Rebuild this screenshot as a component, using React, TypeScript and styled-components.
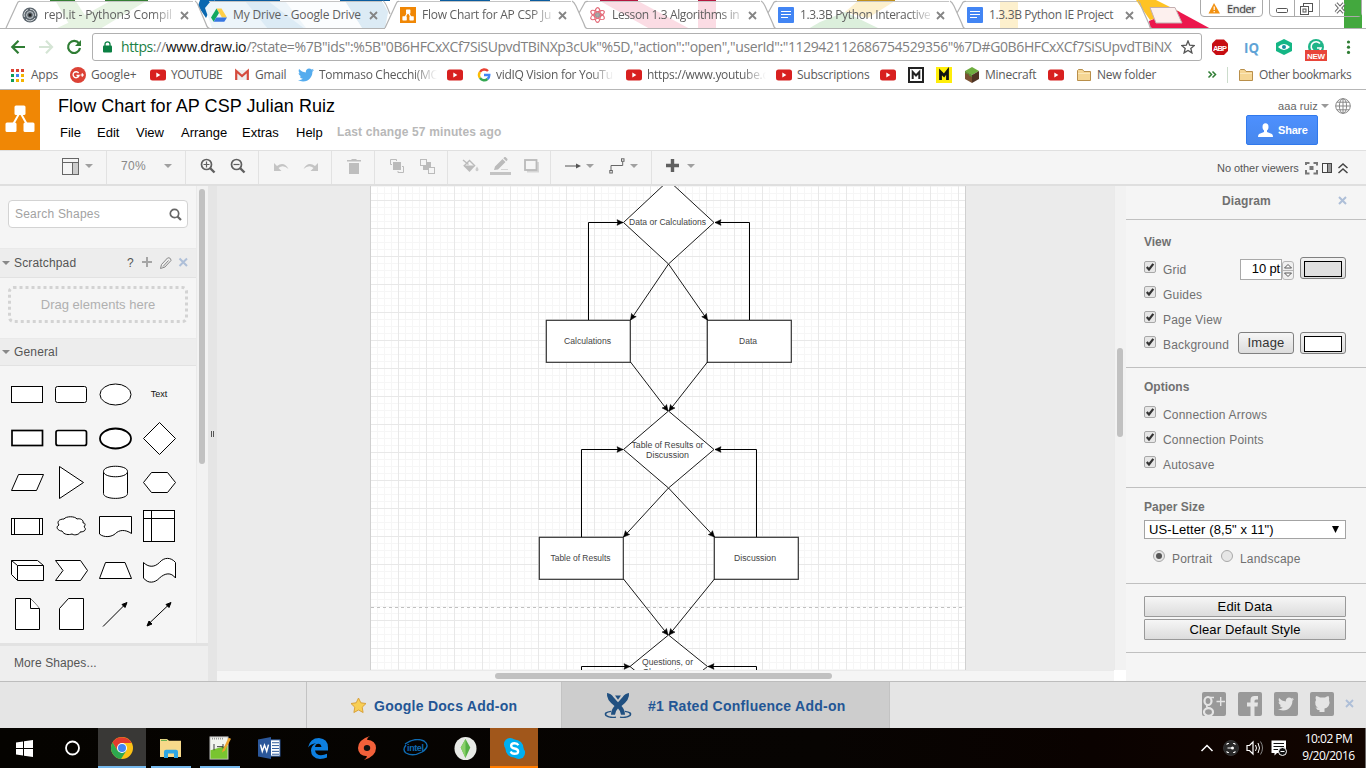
import React from "react";
import styled, { createGlobalStyle } from "styled-components";
import { FaTwitter } from "react-icons/fa";

const Global = createGlobalStyle`
  * { box-sizing: border-box; }
  html, body { margin: 0; padding: 0; overflow: hidden; background: #fff; }
  body { font-family: "Liberation Sans", Arial, sans-serif; }
  svg { display: block; flex: none; }
`;

const ui = `"Open Sans", "Noto Sans", sans-serif`;

const Screen = styled.div`
  width: 1366px;
  height: 768px;
  display: flex;
  flex-direction: column;
  overflow: hidden;
  white-space: nowrap;
`;

/* ---------- browser chrome ---------- */

const TabStrip = styled.div`
  position: relative;
  height: 29px;
  display: flex;
  padding-left: 6px;
  flex: none;
`;
const StripArt = styled.svg`
  position: absolute;
  left: 0;
  top: 0;
`;
const Tab = styled.div`
  position: relative;
  width: 189px;
  height: 29px;
  padding: 1px 0 0 16px;
  display: flex;
  align-items: center;
`;
const TabTitle = styled.span<{ $ls?: number; $fade?: boolean }>`
  width: 130px;
  margin-left: 6px;
  font: 12px/16px ${ui};
  letter-spacing: ${(p) => p.$ls ?? -0.2}px;
  color: #5f5f5f;
  ${(p) => p.$fade && "mask-image: linear-gradient(90deg, #000 108px, transparent 135px);"}
`;
const WindowControls = styled.svg`
  position: absolute;
  left: 1190px;
  top: 0;
`;
const ProfileName = styled.span`
  position: absolute;
  left: 1227px;
  top: 1px;
  font: 11px/15px ${ui};
  letter-spacing: -0.35px;
  color: #444;
  text-shadow: 0 0 2px #888;
`;
const AddressRow = styled.div`
  height: 34px;
  flex: none;
  display: flex;
  align-items: center;
  padding: 2px 0 0 10px;
  background: #fff;
`;
const Omnibox = styled.div`
  width: 1110px;
  height: 28px;
  margin-left: 10px;
  border: 1px solid #b0b0b0;
  border-radius: 3px;
  display: flex;
  align-items: center;
  padding-left: 10px;
`;
const Url = styled.span`
  width: 1060px;
  margin-left: 9px;
  font: 14px/20px ${ui};
  letter-spacing: -0.39px;
  color: #808080;
  i { font-style: normal; color: #1a8043; }
  b { font-weight: 400; color: #111; }
`;
const Extensions = styled.div`
  display: flex;
  align-items: center;
`;
const BookmarkBar = styled.div`
  height: 27px;
  flex: none;
  display: flex;
  align-items: center;
  background: #fff;
  border-bottom: 1px solid #b6b6b6;
  padding-bottom: 2px;
`;
const Bookmark = styled.div<{ $w: number; $gap?: number }>`
  width: ${(p) => p.$w}px;
  display: flex;
  align-items: center;
  gap: ${(p) => p.$gap ?? 5}px;
`;
const BookmarkLabel = styled.span<{ $ls?: number; $fade?: number }>`
  font: 12px/18px ${ui};
  letter-spacing: ${(p) => p.$ls ?? -0.25}px;
  color: #5a5a5a;
  ${(p) => p.$fade && `width:${p.$fade}px; mask-image: linear-gradient(90deg,#000 ${p.$fade - 24}px,transparent);`}
`;

/* ---------- editor header ---------- */

const Header = styled.div`
  height: 60px;
  flex: none;
  display: flex;
  background: #fff;
`;
const Logo = styled.div`
  width: 40px;
  height: 60px;
  background: #f08705;
`;
const TitleBlock = styled.div`
  width: 1206px;
  padding: 5px 0 0 18px;
`;
const DocTitle = styled.div`
  font-size: 18px;
  line-height: 22px;
  color: #000;
  letter-spacing: 0.05px;
`;
const MenuBar = styled.div`
  display: flex;
  padding: 7px 0 0 2px;
  font-size: 13px;
  line-height: 17px;
`;
const MenuItem = styled.span<{ $w: number }>`
  width: ${(p) => p.$w}px;
`;
const SaveStatus = styled.span`
  font-size: 12px;
  font-weight: 700;
  letter-spacing: 0.14px;
  color: #b8b8b8;
`;
const Account = styled.div`
  width: 120px;
  padding: 8px 0 0;
`;
const UserRow = styled.div`
  display: flex;
  align-items: center;
  height: 16px;
  padding-left: 32px;
  font-size: 11px;
  letter-spacing: 0.1px;
  color: #666;
`;
const ShareButton = styled.div`
  width: 72px;
  height: 30px;
  margin-top: 1px;
  display: flex;
  align-items: center;
  gap: 5px;
  padding-left: 11px;
  border: 1px solid #3079ed;
  border-radius: 2px;
  background: linear-gradient(#4d90fe, #4787ed);
  color: #fff;
  font-weight: 700;
  font-size: 11px;
  letter-spacing: -0.2px;
`;
const Toolbar = styled.div`
  height: 36px;
  flex: none;
  display: flex;
  background: #f5f5f5;
  border-top: 1px solid #e0e0e0;
  border-bottom: 2px solid #dfdfdf;
`;
const ToolGroup = styled.div<{ $w: number; $pl: number; $gap?: number }>`
  width: ${(p) => p.$w}px;
  padding: 0 0 3px ${(p) => p.$pl}px;
  gap: ${(p) => p.$gap ?? 6}px;
  display: flex;
  align-items: center;
  border-right: 1px solid #e2e2e2;
`;
const ZoomLabel = styled.span`
  width: 37px;
  font-size: 12px;
  letter-spacing: 0.3px;
  color: #888;
`;
const ViewerInfo = styled.div`
  margin-left: auto;
  width: 149px;
  display: flex;
  align-items: center;
  justify-content: space-between;
  font-size: 11px;
  letter-spacing: -0.05px;
  color: #555;
`;

/* ---------- workspace ---------- */

const Workspace = styled.div`
  height: 495px;
  flex: none;
  display: flex;
  background: #f5f5f5;
`;
const Sidebar = styled.div`
  width: 208px;
  display: flex;
  flex-direction: column;
`;
const SidebarBody = styled.div`
  height: 457px;
  display: flex;
`;
const Palettes = styled.div`
  width: 196px;
`;
const VScroll = styled.div<{ $w: number; $h: number; $top: number; $pad: number }>`
  width: ${(p) => p.$w}px;
  padding: ${(p) => p.$top}px 0 0 ${(p) => p.$pad}px;
  background: #f2f2f2;
  border-left: 1px solid #eaeaea;
  &::after {
    content: "";
    display: block;
    width: 6px;
    height: ${(p) => p.$h}px;
    border-radius: 3px;
    background: #c1c1c1;
  }
`;
const SearchBox = styled.div`
  margin: 14px 0 0 8px;
  width: 180px;
  height: 28px;
  border: 1px solid #d3d3d3;
  border-radius: 4px;
  background: #fff;
  display: flex;
  align-items: center;
  justify-content: space-between;
  padding: 0 5px 0 6px;
  font-size: 12px;
  letter-spacing: 0.22px;
  color: #a2a2a2;
`;
const SectionHead = styled.div<{ $mt: number; $h: number }>`
  margin-top: ${(p) => p.$mt}px;
  height: ${(p) => p.$h}px;
  display: flex;
  align-items: center;
  padding-left: 2px;
  background: #ededed;
  border-top: 1px solid #e9e9e9;
  border-bottom: 1px solid #e2e2e2;
  font-size: 12px;
  letter-spacing: 0.15px;
  color: #555;
`;
const HeadLabel = styled.span<{ $w: number }>`
  width: ${(p) => p.$w}px;
  margin-left: 4px;
`;
const DropZone = styled.div`
  position: relative;
  margin: 8px 0 0 8px;
  width: 180px;
  height: 37px;
  display: flex;
  align-items: center;
  justify-content: center;
  font-size: 13px;
  letter-spacing: 0.02px;
  color: #b0b0b0;
`;
const DropOutline = styled.svg`
  position: absolute;
  left: 0;
  top: 0;
`;
const ShapeGrid = styled.div`
  display: grid;
  grid-template-columns: repeat(4, 44px);
  grid-auto-rows: 44px;
  padding: 6px 0 0 5px;
`;
const ShapeCell = styled.div`
  width: 44px;
  height: 44px;
  display: flex;
  align-items: center;
  justify-content: center;
  font-size: 9px;
  color: #111;
`;
const MoreShapes = styled.div`
  height: 38px;
  padding: 0 0 0 14px;
  line-height: 34px;
  border-top: 3px solid #e2e2e2;
  background: #eee;
  font-size: 12px;
  letter-spacing: 0.1px;
  color: #555;
`;
const Splitter = styled.div`
  width: 9px;
  background: #e5e5e5;
  display: flex;
  align-items: center;
  justify-content: center;
  gap: 1px;
  span { width: 1px; height: 6px; background: #555; }
`;
const CanvasColumn = styled.div`
  width: 897px;
  display: flex;
  flex-direction: column;
`;
const HScroll = styled.div`
  height: 11px;
  padding: 2px 0 0 278px;
  border-top: 1px solid #eaeaea;
  background: #f5f5f5;
  &::after {
    content: "";
    display: block;
    width: 337px;
    height: 6px;
    border-radius: 3px;
    background: #c1c1c1;
  }
`;
const ScrollColumn = styled.div`
  width: 12px;
  height: 495px;
  display: flex;
  background: #fff;
  padding-bottom: 11px;
`;
const FormatPanel = styled.div`
  width: 240px;
  background: #f5f5f5;
  font-size: 12px;
  letter-spacing: 0.2px;
  color: #707070;
`;
const PanelTitle = styled.div`
  height: 34px;
  padding: 0 19px 4px 96px;
  display: flex;
  align-items: center;
  justify-content: space-between;
  border-bottom: 1px solid #c0c0c0;
  font-weight: 700;
  letter-spacing: 0.1px;
`;
const Section = styled.div<{ $h: number; $pt: number }>`
  height: ${(p) => p.$h}px;
  padding: ${(p) => p.$pt}px 20px 0 18px;
  border-bottom: 1px solid #c0c0c0;
`;
const SectionTitle = styled.div<{ $mb: number }>`
  font-weight: 700;
  height: 16px;
  line-height: 16px;
  letter-spacing: 0;
  margin-bottom: ${(p) => p.$mb}px;
`;
const OptionRow = styled.div`
  height: 25px;
  display: flex;
  align-items: center;
`;
const CheckMark = styled.svg`
  margin-bottom: 1px;
`;
const OptionLabel = styled.span<{ $w?: number }>`
  width: ${(p) => (p.$w ? p.$w + "px" : "auto")};
  margin-left: 7px;
  padding-top: 5px;
`;
const RadioLabel = styled(OptionLabel)`
  padding-top: 3px;
`;
const PointInput = styled.div`
  width: 42px;
  height: 21px;
  margin-top: 3px;
  padding-right: 1px;
  border: 1px solid #a9a9a9;
  background: #fff;
  color: #000;
  font-size: 13px;
  line-height: 18px;
  text-align: right;
  letter-spacing: -0.15px;
`;
const Spinner = styled.svg`
  margin-top: 6px;
`;
const ColorButton = styled.div<{ $c: string }>`
  width: 46px;
  height: 22px;
  margin: 1px 0 0 6px;
  padding: 3px;
  border: 1px solid #808080;
  border-radius: 3px;
  background: linear-gradient(#f2f2f2, #ddd);
  &::after {
    content: "";
    display: block;
    height: 14px;
    border: 1px solid #000;
    background: ${(p) => p.$c};
  }
`;
const ImageButton = styled.div`
  width: 56px;
  height: 22px;
  margin-top: 1px;
  border: 1px solid #808080;
  border-radius: 3px;
  background: linear-gradient(#f6f6f6, #dcdcdc);
  color: #333;
  font-size: 13px;
  line-height: 19px;
  text-align: center;
`;
const PaperSelect = styled.div`
  width: 202px;
  height: 19px;
  border: 1px solid #a3a3a3;
  background: #fff;
  display: flex;
  align-items: center;
  justify-content: space-between;
  padding: 0 6px 0 4px;
  color: #000;
  font-size: 13px;
  letter-spacing: 0.1px;
`;
const Orientation = styled.div`
  display: flex;
  align-items: center;
  margin-top: 8px;
  height: 21px;
  padding-left: 9px;
`;
const WideButton = styled.div`
  width: 202px;
  height: 21px;
  margin-bottom: 2px;
  border: 1px solid #999;
  border-radius: 1px;
  background: linear-gradient(#f6f6f6, #dcdcdc);
  color: #000;
  text-align: center;
  line-height: 19px;
  font-size: 13px;
  letter-spacing: 0.15px;
`;

/* ---------- footer ---------- */

const Footer = styled.div`
  height: 47px;
  flex: none;
  display: flex;
  background: #e5e5e5;
  border-top: 1px solid #bdbdbd;
`;
const FooterBlank = styled.div`
  width: 306px;
`;
const AddOn = styled.div<{ $w: number; $pl: number; $active?: boolean; $gap: number }>`
  width: ${(p) => p.$w}px;
  padding: 1px 0 0 ${(p) => p.$pl}px;
  gap: ${(p) => p.$gap}px;
  display: flex;
  align-items: center;
  border-left: 1px solid #c3c3c3;
  background: ${(p) => (p.$active ? "#cdcdcd" : "transparent")};
  font-weight: 700;
  font-size: 14px;
  letter-spacing: 0.26px;
  color: #235695;
`;
const Socials = styled.div`
  width: 477px;
  border-left: 1px solid #c3c3c3;
  padding: 0 12px 0 0;
  display: flex;
  align-items: center;
  justify-content: flex-end;
  gap: 12px;
`;
const SocialTile = styled.div`
  width: 24px;
  height: 24px;
  margin-bottom: 2px;
  border-radius: 2px;
  background: #999;
  color: #e5e5e5;
  display: flex;
  align-items: center;
  justify-content: center;
  overflow: hidden;
`;
const FooterClose = styled.div`
  padding-bottom: 4px;
  margin-left: -1px;
`;

/* ---------- taskbar ---------- */

const Taskbar = styled.div`
  height: 40px;
  flex: none;
  display: flex;
  background: linear-gradient(90deg, #050300, #070402 60%, #0a0200 80%, #120500);
`;
const TaskItem = styled.div<{ $bg?: string; $bar?: string; $narrow?: boolean }>`
  width: 49px;
  height: 40px;
  padding-right: 1px;
  display: flex;
  align-items: center;
  justify-content: center;
  position: relative;
  &::before {
    content: "";
    position: absolute;
    inset: 0 1px 0 0;
    background: ${(p) => p.$bg ?? "transparent"};
  }
  &::after {
    content: "";
    position: absolute;
    bottom: 0;
    height: 2px;
    left: ${(p) => (p.$narrow ? 4 : 0)}px;
    right: ${(p) => (p.$narrow ? 5 : 1)}px;
    background: ${(p) => p.$bar ?? "transparent"};
  }
  svg { position: relative; }
`;
const Tray = styled.div`
  margin-left: auto;
  width: 166px;
  display: flex;
  align-items: center;
`;
const Clock = styled.div`
  width: 60px;
  margin-left: 7px;
  padding-bottom: 2px;
  font: 12px/17px ${ui};
  letter-spacing: -0.5px;
  color: #fff;
  text-align: center;
`;
const DesktopEdge = styled.div`
  width: 1px;
  height: 40px;
  margin-left: 7px;
  background: #6d6a68;
`;

/* ---------- icons ---------- */

const Cross = ({ c = "#858585", s = 9, w = 1.8 }: { c?: string; s?: number; w?: number }) => (
  <svg width={s} height={s} viewBox="0 0 9 9">
    <path d="M1 1L8 8M8 1L1 8" stroke={c} strokeWidth={w} fill="none" />
  </svg>
);
const Caret = ({ c = "#a0a0a0", s = 8 }: { c?: string; s?: number }) => (
  <svg width={s} height={s / 2} viewBox="0 0 8 4"><path d="M0 0H8L4 4Z" fill={c} /></svg>
);
const YouTube = () => (
  <svg width="16" height="16" viewBox="0 0 16 16">
    <rect x="0" y="2.5" width="16" height="11" rx="2.5" fill="#d8201f" />
    <path d="M6.3 5.6V10.4L10.4 8Z" fill="#fff" />
  </svg>
);
const Folder = () => (
  <svg width="16" height="16" viewBox="0 0 16 16">
    <path d="M1.5 13.5V3.5L2.5 2.5H6.5L8 4.5H14.5V13.5Z" fill="#f5d694" stroke="#b98f4a" />
    <path d="M2 6.5H14" stroke="#fbe7b8" />
  </svg>
);
const DocIcon = () => (
  <svg width="16" height="16" viewBox="0 0 16 16">
    <rect width="16" height="16" rx="1" fill="#4285f4" />
    <path d="M3 4.5H13M3 7.5H13M3 10.5H10" stroke="#fff" strokeWidth="1.2" />
  </svg>
);
const ReplIcon = () => (
  <svg width="16" height="16" viewBox="0 0 16 16">
    <circle cx="8" cy="8" r="7.6" fill="#5d666e" />
    <path d="M8 2.2A5.8 5.8 0 0 1 13.6 9M13 11A5.8 5.8 0 0 1 4 12.3M2.4 10A5.8 5.8 0 0 1 6 2.6" stroke="#dfe3e5" strokeWidth=".9" fill="none" />
    <circle cx="8" cy="8" r="3.4" fill="none" stroke="#c9ced1" strokeWidth="1" />
    <circle cx="8" cy="8" r="1.5" fill="#222" />
  </svg>
);
const DriveIcon = () => (
  <svg width="16" height="16" viewBox="0 0 16 16">
    <path d="M5.5 1.5H10.5L16 10.5H11Z" fill="#ffcf48" />
    <path d="M5.5 1.5L8 6L2.7 14.7L0 10.5Z" fill="#11a861" />
    <path d="M5.3 10.5H16L13.3 14.7H2.7Z" fill="#3777e3" />
  </svg>
);
const DrawIcon = () => (
  <svg width="16" height="16" viewBox="0 0 16 16">
    <rect width="16" height="16" fill="#f08705" />
    <path d="M8 5L4.5 11M8 5L11.5 11" stroke="#fff" strokeWidth="1.2" />
    <rect x="6" y="2.5" width="4.4" height="4.2" rx=".6" fill="#fff" />
    <rect x="2.4" y="9.2" width="4.4" height="4.2" rx=".6" fill="#fff" />
    <rect x="9.4" y="9.2" width="4.4" height="4.2" rx=".6" fill="#fff" />
  </svg>
);
const AtomIcon = () => (
  <svg width="17" height="16" viewBox="0 0 17 16" fill="none" stroke="#e36a78" strokeWidth="1.2">
    <ellipse cx="8.5" cy="8" rx="2.8" ry="7.3" />
    <ellipse cx="8.5" cy="8" rx="2.8" ry="7.6" transform="rotate(60 8.5 8)" />
    <ellipse cx="8.5" cy="8" rx="2.8" ry="7.6" transform="rotate(-60 8.5 8)" />
    <circle cx="8.5" cy="8" r="2" fill="#aaa" stroke="#999" />
  </svg>
);

const StripArtwork = () => (
  <StripArt width="1366" height="29" viewBox="0 0 1366 29">
    <rect width="1366" height="29" fill="#fff" />
    <path d="M55 0H75L88 20L84 29H72Z" fill="#e6f3e2" />
    <path d="M112 0H148L100 29H55L85 15Z" fill="#e6f3e2" />
    <path d="M200 0H215L206 18L198 6Z" fill="#0a68b0" />
    <path d="M205 8L210 2H380L388 12L385 28H212Z" fill="#edf5fa" />
    <path d="M245 1H268L305 29H268Z" fill="#dcebf5" />
    <path d="M345 1H382L388 12L385 28H362Z" fill="#dcebf5" />
    <path d="M285 1H345L362 28H306Z" fill="#fbfdfe" />
    <path d="M600 1H638L690 29H650Z" fill="#fbdce4" />
    <path d="M698 1H716V29H698Z" fill="#fbdce4" />
    <path d="M820 22L845 12L880 29H808Z" fill="#dcefdc" />
    <path d="M858 1H895L868 18L845 12Z" fill="#fdf0cd" />
    <path d="M1000 1H1018V29H1000Z" fill="#fdf0cd" />
    <path d="M1136 0H1156L1180 12L1150 20Z" fill="#ffc324" />
    <path d="M1149 21L1176 10L1211 29H1150Z" fill="#ec174d" />
    <path d="M1150 7.5H1175L1182 23H1156Z" fill="#fdf0ee" stroke="#c3aeb0" />
    <path d="M1344 0H1362V29H1344Z" fill="#43a83e" />
    <path d="M50 0H75V1H50ZM105 0H148V1H105Z" fill="#357f34" />
    <path d="M215 0H280V1H215ZM340 0H390V1H340ZM530 0H550V1H530Z" fill="#0a5c9e" />
    <path d="M440 0H490V1H440Z" fill="#0a5c9e" />
    <path d="M600 0H638V1H600ZM698 0H716V1H698Z" fill="#b5173f" />
    <path d="M857 0H895V1H857Z" fill="#c08f1c" />
    <path d="M19 1.5H193M209 1.5H382M397 1.5H571M586 1.5H760M775 1.5H949M964 1.5H1137" stroke="#c4c4c4" />
    <g fill="none" stroke="#b3b3b3" strokeWidth="1.2">
      <path d="M6 28L17 4Q18 1 20 1.500" />
      <path d="M195 1Q197 2 198 5L206 24Q207 28 210 28.500M385 28L396 4Q397 1 399 1.500M383 1Q385 1 390 14" />
      <path d="M572 1Q574 2 576 6L584 24Q585 28 587 28.500M579 13L584 4Q585 1 588 1.500" />
      <path d="M761 1Q763 2 765 6L773 24Q774 28 776 28.500M768 13L773 4Q774 1 777 1.500" />
      <path d="M950 1Q952 2 954 6L962 24Q963 28 965 28.500M957 13L962 4Q963 1 966 1.500" />
      <path d="M1138 1Q1140 2 1141 6L1149 24Q1150 28 1152 28.500" />
      <path d="M0 28.500H385M587 28.500H1366" />
    </g>
  </StripArt>
);

const Controls = () => (
  <WindowControls width="176" height="20" viewBox="1190 0 176 20">
    <path d="M1200.500 0V13Q1200.500 16.500 1204 16.500H1259Q1262.500 16.500 1262.500 13V0" fill="#fff" fillOpacity=".85" stroke="#aaa" />
    <path d="M1269.500 0V13Q1269.500 16.500 1273 16.500H1358Q1361.500 16.500 1361.500 13V0M1294.500 0V16M1319.500 0V16" fill="#fff" fillOpacity=".5" stroke="#aaa" />
    <path d="M1344 0H1361V16H1344Z" fill="#43a83e" />
    <path d="M1214 3L1220 13.500H1208.500Z" fill="#f29111" />
    <path d="M1214.200 6.500V10M1214.200 11V12.300" stroke="#fff" strokeWidth="1.2" />
    <rect x="1276.500" y="8.500" width="11" height="4" rx="1" fill="#fff" stroke="#555" />
    <rect x="1303.500" y="3.500" width="9" height="8" fill="#fff" stroke="#555" />
    <rect x="1300.500" y="6.500" width="8" height="8" fill="#fff" stroke="#555" />
    <rect x="1303" y="9" width="3" height="3" fill="none" stroke="#555" />
    <path d="M1336 3.500L1344 12.500M1344 3.500L1336 12.500" stroke="#666" strokeWidth="3.600" />
    <path d="M1336 3.500L1344 12.500M1344 3.500L1336 12.500" stroke="#fff" strokeWidth="1.800" />
  </WindowControls>
);

const tabs = [
  { icon: <ReplIcon />, title: "repl.it - Python3 Compil", fade: true, ls: -0.14 },
  { icon: <DriveIcon />, title: "My Drive - Google Drive", ls: -0.15 },
  { icon: <DrawIcon />, title: "Flow Chart for AP CSP Ju", fade: true, ls: -0.25 },
  { icon: <AtomIcon />, title: "Lesson 1.3 Algorithms in", fade: true, ls: -0.38 },
  { icon: <DocIcon />, title: "1.3.3B Python Interactive", fade: true, ls: -0.36 },
  { icon: <DocIcon />, title: "1.3.3B Python IE Project", ls: -0.35 },
];

const BrowserTop = () => (
  <>
    <TabStrip>
      <StripArtwork />
      {tabs.map((t) => (
        <Tab key={t.title}>
          {t.icon}
          <TabTitle $ls={t.ls} $fade={t.fade}>{t.title}</TabTitle>
          <svg width="6" height="1" />
          <Cross />
        </Tab>
      ))}
      <Controls />
      <ProfileName>Ender</ProfileName>
    </TabStrip>
    <AddressRow>
      <svg width="72" height="16" viewBox="10 0 72 16" fill="none" strokeWidth="2.200">
        <path d="M25 8H12.500M18.500 1.800L12.300 8L18.500 14.200" stroke="#2f7d34" />
        <path d="M39 8H51.500M46 1.800L52 8L46 14.200" stroke="#d5e5d5" />
        <path d="M79 4.500A6 6 0 1 0 80 9" stroke="#2f7d34" />
        <path d="M81 1V7H75Z" fill="#2f7d34" stroke="none" />
      </svg>
      <Omnibox>
        <svg width="9" height="12" viewBox="0 0 9 12">
          <rect y="4.500" width="9" height="7" rx="1" fill="#0b8043" />
          <path d="M2 5V3.300A2.500 2.500 0 0 1 7 3.300V5" fill="none" stroke="#0b8043" strokeWidth="1.300" />
        </svg>
        <Url>
          <i>https</i>://<b>www.draw.io</b>/?state=%7B"ids":%5B"0B6HFCxXCf7SiSUpvdTBiNXp3cUk"%5D,"action":"open","userId":"112942112686754529356"%7D#G0B6HFCxXCf7SiSUpvdTBiNX
        </Url>
        <svg width="14" height="14" viewBox="0 0 14 14">
          <path d="M7 1L8.700 5.200L13.300 5.500L9.800 8.400L10.900 12.900L7 10.400L3.100 12.900L4.200 8.400L.7 5.500L5.300 5.200Z" fill="none" stroke="#555" strokeWidth="1.300" />
        </svg>
      </Omnibox>
      <Extensions>
        <svg width="160" height="30" viewBox="1202 32 160 30">
          <path d="M1216 39.500H1224L1228 43.500V51L1224 55H1216L1212 51V43.500Z" fill="#c70d12" />
          <text x="1213" y="50.500" fontSize="7.500" fontWeight="700" fontFamily="Liberation Sans" fill="#fff" textLength="14">ABP</text>
          <text x="1244" y="52.500" fontSize="15" fontWeight="700" fontFamily="Open Sans" fill="#60a3d6" textLength="15" lengthAdjust="spacingAndGlyphs">IQ</text>
          <path d="M1284 39L1292 43V51L1284 55L1276 51V43Z" fill="#14b685" />
          <path d="M1278 47Q1284 41 1290 47Q1284 53 1278 47Z" fill="#fff" />
          <circle cx="1284" cy="47" r="2" fill="#1a8fa0" />
          <circle cx="1316" cy="47" r="8" fill="#1fb588" />
          <path d="M1320 43.500A5 5 0 1 0 1321 48H1317" fill="none" stroke="#fff" strokeWidth="1.600" />
          <rect x="1305" y="50" width="22" height="11" fill="#e8453a" />
          <text x="1307" y="59" fontSize="8" fontWeight="700" fontFamily="Liberation Sans" fill="#fff" textLength="18">NEW</text>
          <g fill="#2f7d34"><circle cx="1348.500" cy="42" r="1.600" /><circle cx="1348.500" cy="47.200" r="1.600" /><circle cx="1348.500" cy="52.400" r="1.600" /></g>
        </svg>
      </Extensions>
    </AddressRow>
    <BookmarkBar>
      <Bookmark $w={70} $gap={7}>
        <svg width="24" height="14" viewBox="0 0 24 14">
          {["#db4437", "#db4437", "#db4437", "#0f9d58", "#4285f4", "#f4b400", "#0f9d58", "#f4b400", "#f4b400"].map((c, i) => (
            <rect key={i} x={11 + (i % 3) * 5} y={1 + Math.floor(i / 3) * 5} width="3" height="3" fill={c} />
          ))}
        </svg>
        <BookmarkLabel>Apps</BookmarkLabel>
      </Bookmark>
      <Bookmark $w={80}>
        <svg width="16" height="16" viewBox="0 0 16 16">
          <circle cx="8" cy="8" r="8" fill="#dc4236" />
          <path d="M8.600 6A3 3 0 1 0 9 8.500H6.500" stroke="#fff" strokeWidth="1.400" fill="none" />
          <path d="M10.500 8H14M12.300 6.200V9.800" stroke="#fff" strokeWidth="1.200" />
        </svg>
        <BookmarkLabel $ls={-0.1}>Google+</BookmarkLabel>
      </Bookmark>
      <Bookmark $w={84}><YouTube /><BookmarkLabel $ls={-0.5}>YOUTUBE</BookmarkLabel></Bookmark>
      <Bookmark $w={64}>
        <svg width="16" height="16" viewBox="0 0 16 16">
          <rect x="1.500" y="3" width="13" height="10" fill="#eee" />
          <path d="M2.200 13V4L8 9L13.800 4V13" stroke="#d54b3d" strokeWidth="2.200" fill="none" />
        </svg>
        <BookmarkLabel>Gmail</BookmarkLabel>
      </Bookmark>
      <Bookmark $w={149}><FaTwitter size={16} color="#55acee" /><BookmarkLabel $fade={118} $ls={-0.3}>Tommaso Checchi(MC</BookmarkLabel></Bookmark>
      <Bookmark $w={30}><YouTube /></Bookmark>
      <Bookmark $w={149}>
        <svg width="14" height="16" viewBox="0 0 14 16" fill="none" strokeWidth="2.400">
          <path d="M11 4A5 5 0 0 0 3 5" stroke="#ea4335" />
          <path d="M3 5A5.200 5.200 0 0 0 3 11" stroke="#fbbc05" />
          <path d="M3 11A5 5 0 0 0 10.500 12" stroke="#34a853" />
          <path d="M10.500 12A5 5 0 0 0 12.300 8H7" stroke="#4285f4" />
        </svg>
        <BookmarkLabel $fade={118} $ls={-0.3}>vidIQ Vision for YouTu</BookmarkLabel>
      </Bookmark>
      <Bookmark $w={150}><YouTube /><BookmarkLabel $fade={119} $ls={-0.3}>https://www.youtube.c</BookmarkLabel></Bookmark>
      <Bookmark $w={104}><YouTube /><BookmarkLabel>Subscriptions</BookmarkLabel></Bookmark>
      <Bookmark $w={28}><YouTube /></Bookmark>
      <Bookmark $w={28}>
        <svg width="16" height="16" viewBox="0 0 16 16"><rect x="1" y="1" width="14" height="14" fill="#fff" stroke="#222" strokeWidth="2" /><path d="M4.700 12V5L8 8.500L11.300 5V12" stroke="#222" strokeWidth="2" fill="none" /></svg>
      </Bookmark>
      <Bookmark $w={28}>
        <svg width="16" height="16" viewBox="0 0 16 16"><rect width="16" height="16" fill="#ffee0a" /><path d="M4.500 13V5L8 8.500L11.500 4V13" stroke="#111" strokeWidth="2.800" fill="none" /></svg>
      </Bookmark>
      <Bookmark $w={84}>
        <svg width="16" height="16" viewBox="0 0 16 16">
          <path d="M8 0L15 4L8 8L1 4Z" fill="#6fae3f" /><path d="M1 4L8 8V16L1 12Z" fill="#7a5233" /><path d="M15 4L8 8V16L15 12Z" fill="#4f3423" />
          <path d="M1 4L8 8V10L5 8.500V7.500L1 6Z" fill="#5c9434" />
        </svg>
        <BookmarkLabel>Minecraft</BookmarkLabel>
      </Bookmark>
      <Bookmark $w={28}><YouTube /></Bookmark>
      <Bookmark $w={131}><Folder /><BookmarkLabel $ls={-0.22}>New folder</BookmarkLabel></Bookmark>
      <Bookmark $w={31} $gap={10}>
        <svg width="10" height="10" viewBox="0 0 10 10"><path d="M1.500 1.500L4.500 4.500L1.500 7.500M5.500 1.500L8.500 4.500L5.500 7.500" stroke="#2f7d34" strokeWidth="1.500" fill="none" /></svg>
        <svg width="1" height="16"><rect width="1" height="16" fill="#ccdccc" /></svg>
      </Bookmark>
      <Bookmark $w={120}><Folder /><BookmarkLabel $ls={-0.42}>Other bookmarks</BookmarkLabel></Bookmark>
    </BookmarkBar>
  </>
);

const EditorHeader = () => (
  <>
    <Header>
      <Logo>
        <svg width="40" height="60" viewBox="0 0 40 60">
          <path d="M20 22L11 38M20 22L29 38" stroke="#fff" strokeWidth="2" />
          <rect x="14.500" y="15.500" width="11" height="9.500" rx="1.500" fill="#fff" />
          <rect x="5.500" y="32.500" width="11" height="9.500" rx="1.500" fill="#fff" />
          <rect x="23.500" y="32.500" width="11" height="9.500" rx="1.500" fill="#fff" />
        </svg>
      </Logo>
      <TitleBlock>
        <DocTitle>Flow Chart for AP CSP Julian Ruiz</DocTitle>
        <MenuBar>
          <MenuItem $w={37}>File</MenuItem>
          <MenuItem $w={39}>Edit</MenuItem>
          <MenuItem $w={45}>View</MenuItem>
          <MenuItem $w={61}>Arrange</MenuItem>
          <MenuItem $w={54}>Extras</MenuItem>
          <MenuItem $w={41}>Help</MenuItem>
          <SaveStatus>Last change 57 minutes ago</SaveStatus>
        </MenuBar>
      </TitleBlock>
      <Account>
        <UserRow>
          aaa ruiz
          <svg width="17" height="16" viewBox="0 0 17 16">
            <path d="M3 6H11L7 10Z" fill="#999" />
          </svg>
          <svg width="16" height="16" viewBox="0 0 16 16" fill="none" stroke="#888">
            <circle cx="8" cy="8" r="7.300" /><ellipse cx="8" cy="8" rx="3.600" ry="7.300" />
            <path d="M8 .7V15.300M.7 8H15.300M2 4.200H14M2 11.800H14" />
          </svg>
        </UserRow>
        <ShareButton>
          <svg width="15" height="14" viewBox="0 0 15 14"><ellipse cx="7.500" cy="4" rx="3" ry="3.700" fill="#fff" /><path d="M6 6H9V9L14 11Q15 12 15 14H0Q0 12 1 11L6 9Z" fill="#fff" /></svg>
          Share
        </ShareButton>
      </Account>
    </Header>
    <Toolbar>
      <ToolGroup $w={107} $pl={62}>
        <svg width="17" height="17" viewBox="0 0 17 17"><rect x=".5" y=".5" width="16" height="16" fill="none" stroke="#666" /><path d="M0 4.500H17M10.500 4.500V16" stroke="#666" /><rect x="11" y="5" width="5" height="11" fill="#ccc" /></svg>
        <Caret />
      </ToolGroup>
      <ToolGroup $w={79} $pl={14}><ZoomLabel>70%</ZoomLabel><Caret /></ToolGroup>
      <ToolGroup $w={73} $pl={14} $gap={14}>
        {["M6 3V9M3 6H9", "M3 6H9"].map((d) => (
          <svg key={d} width="16" height="16" viewBox="0 0 16 16" fill="none" stroke="#606060"><circle cx="6.500" cy="6.500" r="5" strokeWidth="1.700" /><path d="M10 10L14.500 14.500" strokeWidth="2.400" /><path d={d} transform="translate(.5 .5)" strokeWidth="1.200" /></svg>
        ))}
      </ToolGroup>
      <ToolGroup $w={73} $pl={14} $gap={14}>
        <svg width="16" height="12" viewBox="0 0 16 12"><path d="M1 3V11H8.500L5.500 8Q10 4 15.500 9Q11 1 4 6Z" fill="#c4c4c4" /></svg>
        <svg width="16" height="12" viewBox="0 0 16 12"><path d="M15 3V11H7.500L10.500 8Q6 4 .5 9Q5 1 12 6Z" fill="#c4c4c4" /></svg>
      </ToolGroup>
      <ToolGroup $w={43} $pl={15}>
        <svg width="14" height="15" viewBox="0 0 14 15"><path d="M0 1H4.500V0H9.500V1H14V2.500H0ZM2 4H12V15H2Z" fill="#bebebe" /></svg>
      </ToolGroup>
      <ToolGroup $w={73} $pl={14} $gap={14}>
        <svg width="16" height="16" viewBox="0 0 16 16"><path d="M1.500 6.500V1.500H7.500V3M9 14.500H14.500V8.500H13M1.500 6.500H3M9 14.500V13" fill="none" stroke="#bbb" /><rect x="4" y="4" width="8" height="8" fill="#bbb" /></svg>
        <svg width="16" height="16" viewBox="0 0 16 16"><rect x="4" y="4" width="8" height="8" fill="#bbb" /><rect x="1.500" y="1.500" width="6" height="6" fill="#f5f5f5" stroke="#bbb" /><rect x="9.500" y="9.500" width="6" height="6" fill="#f5f5f5" stroke="#bbb" /></svg>
      </ToolGroup>
      <ToolGroup $w={103} $pl={14} $gap={11}>
        <svg width="17" height="16" viewBox="0 0 17 16"><path d="M1 2L6.500 6.500M2 8L7.500 2.500L13 8" fill="none" stroke="#bbb" strokeWidth="1.400" /><path d="M1 7.500H13.500L7.500 14Z" fill="#bbb" /><path d="M15 8.500Q17 11 16.300 12.500Q15 14 13.700 12.500Q13 11 15 8.500Z" fill="#ccc" /></svg>
        <svg width="21" height="18" viewBox="0 0 21 18"><path d="M4 13L5 9.500L12.500 2L15.500 5L8 12.500ZM13.300 1.200L14.500 0H15.500L17.500 2V3L16.300 4.200Z" fill="#bbb" /><path d="M11 12.500H18" stroke="#d5d5d5" /><rect y="15" width="21" height="3" fill="#c4c4c4" /></svg>
        <svg width="17" height="14" viewBox="-2 0 17 14"><rect x="3" y="3" width="12" height="10.500" fill="#d5d5d5" /><rect x="1" y="1" width="11.500" height="10" fill="#f5f5f5" stroke="#bababa" strokeWidth="1.800" /></svg>
      </ToolGroup>
      <ToolGroup $w={101} $pl={14} $gap={5}>
        <svg width="16" height="6" viewBox="0 0 16 6"><path d="M0 3H12" stroke="#555" /><path d="M11 0.500L16 3L11 5.500Z" fill="#555" /></svg>
        <Caret />
        <svg width="5" height="1" />
        <svg width="16" height="16" viewBox="0 0 16 16" fill="none" stroke="#666"><rect x=".8" y="12.500" width="2.500" height="2.500" /><rect x="12.500" y=".8" width="2.500" height="2.500" /><path d="M2 12.500V7.500H13.700V3.500" /></svg>
        <Caret />
      </ToolGroup>
      <svg width="45" height="33" viewBox="0 0 45 33"><path d="M14 14.500H27M20.500 8V21" stroke="#606060" strokeWidth="3.400" /><path d="M35 13H43L39 17Z" fill="#a0a0a0" /></svg>
      <ViewerInfo>
        No other viewers
        <svg width="61" height="14" viewBox="1305 0 61 14" fill="none">
          <path d="M1306 4V2H1309.500M1313.500 2H1317V4.500M1317 9V12.500H1313.500M1309.500 12.500H1306V9" stroke="#777" strokeWidth="2" />
          <rect x="1309.500" y="5" width="4" height="4" fill="#777" />
          <rect x="1322.500" y="2.500" width="9" height="9" stroke="#444" /><rect x="1328" y="3" width="3" height="8" fill="#999" /><path d="M1327.500 3V11" stroke="#444" />
          <path d="M1338.500 7L1343 3L1347.500 7M1338.500 12L1343 8L1347.500 12" stroke="#444" strokeWidth="1.500" />
        </svg>
      </ViewerInfo>
    </Toolbar>
  </>
);

/* Palette thumbnails, drawn around a 0,0 centre. */
const shapes: React.ReactNode[] = [
  <rect x="-15.500" y="-7.500" width="31" height="16" />,
  <rect x="-15.500" y="-7.500" width="31" height="16" rx="2" />,
  <ellipse cx="0.500" cy="0.500" rx="15.500" ry="10.500" />,
  null,
  <rect x="-15" y="-7.500" width="30.500" height="15" strokeWidth="1.700" />,
  <rect x="-15" y="-7.500" width="30.500" height="15" rx="2" strokeWidth="1.700" />,
  <ellipse cx="0.500" cy="0.500" rx="15.500" ry="10" strokeWidth="1.800" />,
  <path d="M0.500 -15.500L16.500 0.500L0.500 16.500L-15.500 0.500Z" />,
  <path d="M-8.500 -7.500H16.500L9.500 8.500H-15.500Z" />,
  <path d="M-11.500 -15.500L12.500 0.500L-11.500 16.500Z" />,
  <><path d="M-11.500 -10.500V11.500C-11.500 18 12.500 18 12.500 11.500V-10.500C12.500 -17.500 -11.500 -17.500 -11.500 -10.500" /><path d="M-11.500 -10.500C-11.500 -3.500 12.500 -3.500 12.500 -10.500" /></>,
  <path d="M-7.500 -9.500H8.500L16.500 0.500L8.500 10.500H-7.500L-15.500 0.500Z" />,
  <><rect x="-15.500" y="-7.500" width="31" height="16" /><path d="M-12.500 -7.500V8.500M12.500 -7.500V8.500" /></>,
  <path d="M-7 -7C-12 -7 -14.500 -4 -12 -1C-16 1 -13 5 -9 5C-7 9 -2 9 1 8C4 10 9 8 9 6C14 6 16 3 13 1C15 -2 14 -3 12 -3C13 -6 9 -8 6 -7C4 -10 -5 -10 -7 -7Z" />,
  <path d="M-15.500 -9.500H16.500V7.500C10 3 4 4 0.500 7.500C-3 11 -11 12 -15.500 8Z" />,
  <><rect x="-15.500" y="-15.500" width="31" height="31" /><path d="M-7.500 -15.500V15.500M-15.500 -7.500H15.500" /></>,
  <><path d="M-15.500 -9.500H10.500L16.500 -4.500V10.500H-9.500L-15.500 4.500Z" /><path d="M-9.500 10.500V-4.500H16.500M-9.500 -4.500L-15.500 -9.500" /></>,
  <path d="M-15.500 -9.500H9.500L16.500 0.500L9.500 10.500H-15.500L-8 0.500Z" />,
  <path d="M-9.500 -7.500H10L16.500 8.500H-15.500Z" />,
  <path d="M-15.500 -7.500C-11 -3 -5 -2 0.500 -7.500C5 -13 12 -13 16.500 -7.500V8C12 2 6 3 0.500 8C-4 13 -11 14 -15.500 8Z" />,
  <><path d="M-11.500 -15.500H3.500L12.500 -5.500V15.500H-11.500Z" /><path d="M3.500 -15.500V-5.500H12.500" /></>,
  <path d="M-2.500 -15.500H12.500V15.500H-11.500V-5.500Z" />,
  <><path d="M-12 12.500L10 -9.500" /><path d="M12 -11.500L10 -6.500L7 -9.500Z" fill="#000" /></>,
  <><path d="M-10 9.500L10 -9.500" /><path d="M12 -11.500L10 -6.500L7 -9.500ZM-12 12L-10 7L-7 10Z" fill="#000" /></>,
];

const LeftSidebar = () => (
  <Sidebar>
    <SidebarBody>
      <Palettes>
        <SearchBox>
          Search Shapes
          <svg width="13" height="13" viewBox="0 0 13 13" fill="none" stroke="#666"><circle cx="5.500" cy="5.500" r="4.200" strokeWidth="1.700" /><path d="M8.500 8.500L12 12" strokeWidth="2.200" /></svg>
        </SearchBox>
        <SectionHead $mt={20} $h={30}>
          <Caret c="#888" />
          <HeadLabel $w={113}>Scratchpad</HeadLabel>
          ?
          <svg width="56" height="14" viewBox="134 0 56 14" fill="none">
            <path d="M142 6H152M147 1V11" stroke="#a5a5a5" strokeWidth="2" />
            <path d="M160.500 12.500L161.500 8.500L167.500 2Q170.500 1 171 4.500L165 11ZM163 10.500L168.500 4.500" stroke="#888" />
            <path d="M179.500 2.500L187 10M187 2.500L179.500 10" stroke="#aebfd8" strokeWidth="2" />
          </svg>
        </SectionHead>
        <DropZone>
          <DropOutline width="180" height="37"><rect x="1.500" y="1.500" width="177" height="34" rx="4" fill="none" stroke="#d3d3d3" strokeWidth="3" strokeDasharray="3 3" /></DropOutline>
          Drag elements here
        </DropZone>
        <SectionHead $mt={15} $h={28}><Caret c="#888" /><HeadLabel $w={100}>General</HeadLabel></SectionHead>
        <ShapeGrid>
          {shapes.map((s, i) => (
            <ShapeCell key={i}>
              {s ? <svg width="40" height="40" viewBox="-20 -20 40 40" fill="#fff" stroke="#000">{s}</svg> : "Text"}
            </ShapeCell>
          ))}
        </ShapeGrid>
      </Palettes>
      <VScroll $w={12} $h={275} $top={3} $pad={2} />
    </SidebarBody>
    <MoreShapes>More Shapes...</MoreShapes>
  </Sidebar>
);

const arrowTo = (x1: number, y1: number, x2: number, y2: number) => {
  const len = Math.hypot(x2 - x1, y2 - y1);
  const ux = (x2 - x1) / len;
  const uy = (y2 - y1) / len;
  const at = (f: number, side: number) => `${x2 - ux * f - uy * side} ${y2 - uy * f + ux * side}`;
  return `M${x2} ${y2}L${at(6, 2.8)}L${at(5, 0)}L${at(6, -2.8)}Z`;
};

const edges: number[][] = [
  [588.5, 320, 588.5, 222.5, 623, 222.5],
  [749.5, 320, 749.5, 222.5, 715, 222.5],
  [668.5, 264, 630.5, 320],
  [668.5, 264, 707.5, 320],
  [630.5, 362, 668, 411],
  [707.5, 362, 669, 411],
  [581.5, 537, 581.5, 449.5, 623, 449.5],
  [756.5, 537, 756.5, 449.5, 715, 449.5],
  [668.5, 488, 623.5, 537],
  [668.5, 488, 714.5, 537],
  [623.5, 579, 668, 635],
  [714.5, 579, 669, 635],
  [581.5, 680, 581.5, 666.5, 630, 666.5],
  [756.5, 680, 756.5, 666.5, 708, 666.5],
];

const labels: [number, number, string, number][] = [
  [667.5, 225, "Data or Calculations", 77],
  [587.5, 344, "Calculations", 47],
  [748, 344, "Data", 18],
  [667.5, 448, "Table of Results or", 72],
  [667.5, 458, "Discussion", 43],
  [580.5, 561, "Table of Results", 60],
  [755, 561, "Discussion", 42],
  [667.5, 665, "Questions, or", 51],
  [667.5, 675, "Observations", 50],
];

const Diagram = () => (
  <svg width="897" height="484" viewBox="217 186 897 484">
    <defs>
      <pattern id="minor" x="370" y="200" width="7" height="7" patternUnits="userSpaceOnUse"><path d="M.5 0V7M0 .5H7" stroke="#f6f6f6" /></pattern>
      <pattern id="major" x="370" y="200" width="28" height="28" patternUnits="userSpaceOnUse"><path d="M.5 0V28M0 .5H28" stroke="#e8e8e8" /></pattern>
    </defs>
    <rect x="217" y="186" width="897" height="484" fill="#ebebeb" />
    <rect x="370" y="186" width="596" height="484" fill="#fff" />
    <rect x="370" y="186" width="596" height="484" fill="url(#minor)" />
    <rect x="370" y="186" width="596" height="484" fill="url(#major)" />
    <path d="M370.500 186V670M965.500 186V670" stroke="#d0d0d0" />
    <path d="M371 607.500H965" stroke="#c0c0c0" strokeDasharray="3 3" />
    <g fill="#fff" stroke="#000" strokeWidth=".9">
      <path d="M668.500 180.500L714 222.500L668.500 264L623.500 222.500Z" />
      <path d="M668.500 411L714 449.500L668.500 488L623.500 449.500Z" />
      <path d="M668.500 635L707.500 666.500L668.500 698L630 666.500Z" />
    </g>
    <g fill="#fff" stroke="#333" strokeWidth="1.200">
      <rect x="546.300" y="320.300" width="84" height="42" /><rect x="707.300" y="320.300" width="84" height="42" />
      <rect x="539.300" y="537.300" width="84" height="42" /><rect x="714.300" y="537.300" width="84" height="42" />
    </g>
    {edges.map((e, i) => {
      const n = e.length;
      const pts = e.reduce((a, v, k) => a + (k % 2 ? " " : "L") + v, "").slice(1);
      return (
        <g key={i} stroke="#000" fill="none" strokeWidth={n > 4 ? 1 : 0.9}>
          <path d={"M" + pts} />
          <path d={arrowTo(e[n - 4], e[n - 3], e[n - 2], e[n - 1])} fill="#000" strokeWidth=".6" />
        </g>
      );
    })}
    <g fontFamily="Liberation Sans, Arial, sans-serif" fontSize="8.400" fill="#444" textAnchor="middle">
      {labels.map(([x, y, t, w], i) => <text key={i} x={x} y={y - 0.3} textLength={w} lengthAdjust="spacingAndGlyphs">{t}</text>)}
    </g>
  </svg>
);

const Check = () => (
  <CheckMark width="12" height="12" viewBox="0 0 12 12"><rect x=".5" y=".5" width="11" height="11" rx="1.500" fill="#e6e6e6" stroke="#a8a8a8" /><path d="M2.800 6L5 8.500L9.300 2.800" fill="none" stroke="#333" strokeWidth="2.200" /></CheckMark>
);
const Radio = ({ on }: { on?: boolean }) => (
  <svg width="12" height="16" viewBox="0 0 12 16"><circle cx="6" cy="6" r="5.500" fill="#e6e6e6" stroke="#a8a8a8" />{on && <circle cx="6" cy="6" r="3" fill="#555" />}</svg>
);

const RightPanel = () => (
  <FormatPanel>
    <PanelTitle>Diagram<Cross c="#aebfd8" w={2} /></PanelTitle>
    <Section $h={148} $pt={14}>
      <SectionTitle $mb={5}>View</SectionTitle>
      <OptionRow>
        <Check /><OptionLabel $w={77}>Grid</OptionLabel>
        <PointInput>10 pt</PointInput>
        <Spinner width="12" height="19" viewBox="0 0 12 19"><rect x=".5" y=".5" width="11" height="18" rx="2.500" fill="#f0f0f0" stroke="#b5b5b5" /><path d="M0 9.500H12" stroke="#b5b5b5" /><path d="M2.500 7L6 3.500L9.500 7ZM2.500 12L6 15.500L9.500 12Z" fill="#fff" stroke="#555" /></Spinner>
        <ColorButton $c="#e0e0e0" />
      </OptionRow>
      <OptionRow><Check /><OptionLabel>Guides</OptionLabel></OptionRow>
      <OptionRow><Check /><OptionLabel>Page View</OptionLabel></OptionRow>
      <OptionRow>
        <Check /><OptionLabel $w={75}>Background</OptionLabel>
        <ImageButton>Image</ImageButton>
        <ColorButton $c="#fff" />
      </OptionRow>
    </Section>
    <Section $h={120} $pt={11}>
      <SectionTitle $mb={5}>Options</SectionTitle>
      <OptionRow><Check /><OptionLabel>Connection Arrows</OptionLabel></OptionRow>
      <OptionRow><Check /><OptionLabel>Connection Points</OptionLabel></OptionRow>
      <OptionRow><Check /><OptionLabel>Autosave</OptionLabel></OptionRow>
    </Section>
    <Section $h={96} $pt={11}>
      <SectionTitle $mb={5}>Paper Size</SectionTitle>
      <PaperSelect>US-Letter (8,5" x 11")<svg width="7" height="7" viewBox="0 0 7 7"><path d="M0 0H7L3.500 7Z" fill="#000" /></svg></PaperSelect>
      <Orientation>
        <Radio on /><RadioLabel $w={49}>Portrait</RadioLabel>
        <Radio /><RadioLabel>Landscape</RadioLabel>
      </Orientation>
    </Section>
    <Section $h={69} $pt={12}>
      <WideButton>Edit Data</WideButton>
      <WideButton>Clear Default Style</WideButton>
    </Section>
  </FormatPanel>
);

const PageFooter = () => (
  <Footer>
    <FooterBlank />
    <AddOn $w={255} $pl={43} $gap={7}>
      <svg width="17" height="17" viewBox="0 0 17 17"><path d="M8.500 1L10.800 5.800L16 6.500L12.200 10.200L13.100 15.500L8.500 13L3.900 15.500L4.800 10.200L1 6.500L6.200 5.800Z" fill="#f8cf55" stroke="#d9a13a" /></svg>
      <span>Google Docs Add-on</span>
    </AddOn>
    <AddOn $w={328} $pl={42} $gap={16} $active>
      <svg width="28" height="25" viewBox="0 0 28 30" preserveAspectRatio="none" fill="#205081">
        <path d="M3 0Q7 .5 9.500 5L14 11L18.500 5Q21 .5 25 0Q26 8 17.500 15.500Q21 20 21 26L17 26Q16.500 21 14 18.500Q11.500 21 11 26L7 26Q7 20 10.500 15.500Q2 8 3 0Z" />
        <path d="M11 3H17L14 8Z" />
        <path d="M7 22Q0 23 2 27Q5 30 12 29M21 22Q28 23 26 27Q23 30 16 29" fill="none" stroke="#205081" strokeWidth="1.700" />
      </svg>
      <span>#1 Rated Confluence Add-on</span>
    </AddOn>
    <Socials>
      <SocialTile>
        <svg width="24" height="24" viewBox="0 0 24 24" fill="none" stroke="#e5e5e5">
          <ellipse cx="6" cy="9" rx="3.500" ry="4" strokeWidth="2.200" /><path d="M8 5.500H12M5 13Q4 15 6 15.500" strokeWidth="1.500" /><ellipse cx="6.500" cy="20" rx="4.500" ry="3.800" strokeWidth="2.200" /><path d="M14.500 9.500H23M18.700 5V14" strokeWidth="1.400" />
        </svg>
      </SocialTile>
      <SocialTile><svg width="24" height="24" viewBox="0 0 24 24"><path d="M12.500 24V14.500H9V10.500H12.500V8Q12.500 4 16.500 4H20V7.500H18Q16.500 7.500 16.500 9V10.500H20L19.500 14.500H16.500V24Z" fill="#e5e5e5" /></svg></SocialTile>
      <SocialTile><FaTwitter size={16} /></SocialTile>
      <SocialTile>
        <svg width="24" height="24" viewBox="0 0 24 24">
          <path d="M6 4Q8 4 10 5.500H15Q17 4 18.500 4Q19.500 6 19 8Q20.500 11 18.500 14Q17 16 14.500 16.500V20H9.500V18Q7 18.500 6.500 16.500L5.500 15.500Q8 15.500 9 16.500Q6.500 15.500 5.500 13Q4.500 10 6 8Q5 6 6 4Z" fill="#e5e5e5" />
        </svg>
      </SocialTile>
      <FooterClose><Cross c="#aebfd8" s={9} /></FooterClose>
    </Socials>
  </Footer>
);

const WindowsBar = () => (
  <Taskbar>
    <TaskItem>
      <svg width="17" height="17" viewBox="0 0 17 17"><path d="M0 2.500L7 1.500V8H0ZM8 1.300L17 0V8H8ZM0 9H7V15.500L0 14.500ZM8 9H17V17L8 15.700Z" fill="#fff" /></svg>
    </TaskItem>
    <TaskItem><svg width="16" height="16" viewBox="0 0 16 16"><circle cx="7.500" cy="8" r="6.500" fill="none" stroke="#fff" strokeWidth="1.800" /></svg></TaskItem>
    <TaskItem $bg="#393836" $bar="#76b9ed">
      <svg width="22" height="22" viewBox="0 0 22 22">
        <circle cx="11" cy="11" r="11" fill="#fbc116" />
        <path d="M1.500 5.500A11 11 0 0 1 20.600 6H11L6.500 13.500Z" fill="#e33b2e" />
        <path d="M1.500 5.500A11 11 0 0 0 10 22L15.500 13.500L6.500 13.500Z" fill="#2da94f" />
        <circle cx="11" cy="11" r="5" fill="#fff" /><circle cx="11" cy="11" r="4" fill="#4285f4" />
      </svg>
    </TaskItem>
    <TaskItem $bar="#76b9ed" $narrow>
      <svg width="22" height="19" viewBox="0 0 22 21" preserveAspectRatio="none"><path d="M0 0H7L9 2H21V20H0Z" fill="#f7d98a" /><path d="M1 1.500H7" stroke="#49a943" /><path d="M4 21V14Q4 12 6 12H16Q18 12 18 14V21H14V16H8V21Z" fill="#2ea6e4" /></svg>
    </TaskItem>
    <TaskItem $bar="#76b9ed" $narrow>
      <svg width="22" height="24" viewBox="0 0 22 27" preserveAspectRatio="none"><rect x="1" y="1" width="18" height="25" fill="#f2f4ee" stroke="#bbb" /><path d="M1.500 16Q10 13 18.500 11V25.500H1.500Z" fill="#79c530" /><path d="M3 3H15" stroke="#999" strokeDasharray="1 1" strokeWidth="2" /><path d="M5 9V16M8 12H14M14 9V14" stroke="#333" /><path d="M19.500 2L14 15L13 18.500L16 16L22 3Z" fill="#eea52d" /></svg>
    </TaskItem>
    <TaskItem>
      <svg width="23" height="22" viewBox="0 0 23 23" preserveAspectRatio="none"><rect x="11" y="3" width="11" height="17" fill="#fff" stroke="#2b579a" /><path d="M14 6H21M14 9H21M14 12H21M14 15H21M14 18H21" stroke="#2b579a" /><path d="M0 2.500L13 0V23L0 20.500Z" fill="#2b579a" /><path d="M2.500 8L4.300 15L6.500 8.500L8.700 15L10.500 8" fill="none" stroke="#fff" strokeWidth="1.500" /></svg>
    </TaskItem>
    <TaskItem>
      <svg width="20" height="21" viewBox="0 0 20 22" preserveAspectRatio="none"><path d="M0 10Q2 0 11 0Q20 1 20 10V13H7Q8 18 13 18Q16 18 19 16.500V20.500Q16 22 12 22Q3 21 3 13Q3 8 8 5.500Q3 6 0 10ZM7 9.500H13.500Q13 6 10.300 6Q7.500 6 7 9.500Z" fill="#0d7fe0" /></svg>
    </TaskItem>
    <TaskItem>
      <svg width="20" height="24" viewBox="0 0 20 26" preserveAspectRatio="none"><path d="M13 0Q10 2 10 4Q19 5 19 13Q19 22 7 26Q10 24 10 22Q1 21 1 13Q1 4 13 0Z" fill="#f2603a" /><circle cx="10" cy="13" r="3.200" fill="#111" /></svg>
    </TaskItem>
    <TaskItem>
      <svg width="26" height="18" viewBox="0 0 26 18"><path d="M2 5Q12 -2 21 2Q28 7 19 13Q10 18 3 14Q-1 11 3 6" fill="none" stroke="#0f6cb4" strokeWidth="1.400" /><text x="4" y="12" fontFamily="Liberation Sans" fontWeight="700" fontSize="9" fill="#0f6cb4" textLength="17">intel</text></svg>
    </TaskItem>
    <TaskItem>
      <svg width="23" height="23" viewBox="0 0 24 24"><ellipse cx="12" cy="12" rx="11.500" ry="12" fill="#e8eae6" /><path d="M12 2L17 11L12 22L7 11Z" fill="#55b043" /><path d="M12 2V22L7 11Z" fill="#8ad06a" /></svg>
    </TaskItem>
    <TaskItem $bg="#a1571b" $bar="#ff7c00">
      <svg width="23" height="23" viewBox="0 0 24 24"><circle cx="7.500" cy="7.500" r="6.500" fill="#00aff0" /><circle cx="16.500" cy="16.500" r="6.500" fill="#00aff0" /><circle cx="12" cy="12" r="9.500" fill="#00aff0" /><path d="M16 8.500Q15 6.500 12 6.500Q8.500 6.500 8.500 9Q8.500 11.300 12 12Q15.800 12.700 15.800 15Q15.800 17.500 12 17.500Q9 17.500 8 15.200" fill="none" stroke="#fff" strokeWidth="2.400" /></svg>
    </TaskItem>
    <Tray>
      <svg width="92" height="24" viewBox="1200 0 92 24" fill="none" stroke="#fff">
        <path d="M1201.500 15L1207 9.500L1212.500 15" strokeWidth="1.500" />
        <circle cx="1231" cy="12" r="7.500" fill="#2a2a2a" stroke="#333" />
        <path d="M1227 9V7.500H1229M1233 7.500H1235V9M1235 15V16.500H1233M1229 16.500H1227V15" strokeWidth=".9" /><path d="M1227.500 12H1232" /><circle cx="1232.500" cy="12" r="1.500" fill="#fff" stroke="none" />
        <path d="M1247 9.500H1249.500L1253 6V18L1249.500 14.500H1247Z" strokeWidth="1.200" /><path d="M1255.500 9Q1257.500 12 1255.500 15M1258 7Q1261 12 1258 17" /><path d="M1260.500 5.500Q1264.500 12 1260.500 18.500" stroke="#888" />
        <path d="M1271.500 4.500H1286V17H1277L1274.500 19.500V17H1271.500Z" fill="#fff" stroke="none" /><path d="M1273.500 7.500H1284M1273.500 10.500H1284M1273.500 13.500H1278" stroke="#111" /><circle cx="1282.500" cy="15.500" r="4" fill="#111" /><path d="M1280.500 15.500H1284.500" />
      </svg>
      <Clock>10:02 PM<br />9/20/2016</Clock>
      <DesktopEdge />
    </Tray>
  </Taskbar>
);

export default function App() {
  return (
    <Screen>
      <Global />
      <BrowserTop />
      <EditorHeader />
      <Workspace>
        <LeftSidebar />
        <Splitter><span /><span /></Splitter>
        <CanvasColumn>
          <Diagram />
          <HScroll />
        </CanvasColumn>
        <ScrollColumn><VScroll $w={12} $h={89} $top={162} $pad={2} /></ScrollColumn>
        <RightPanel />
      </Workspace>
      <PageFooter />
      <WindowsBar />
    </Screen>
  );
}
